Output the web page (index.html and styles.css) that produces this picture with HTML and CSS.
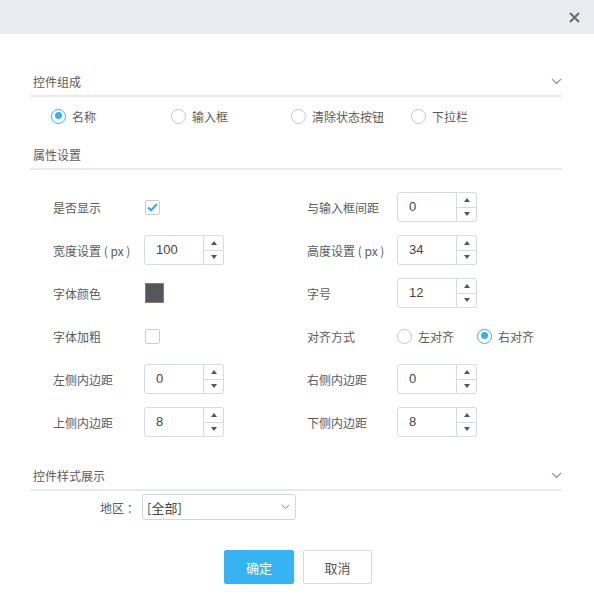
FILE: index.html
```html
<!DOCTYPE html>
<html lang="zh">
<head>
<meta charset="utf-8">
<link rel="stylesheet" href="styles.css">
</head>
<body>
<div class="header">
  <svg class="close" width="11" height="11" viewBox="0 0 11 11"><path d="M1 1L10 10M10 1L1 10" stroke="#6a6a6a" stroke-width="2" fill="none"/></svg>
</div>
<div class="content">
  <div class="sec-head first">
    <span>控件组成</span>
    <svg class="chev" width="11" height="7" viewBox="0 0 11 7"><path d="M1 1.2L5.5 5.4L10 1.2" stroke="#888" stroke-width="1.1" fill="none"/></svg>
  </div>
  <div class="radio-row">
    <label class="radio-item"><span class="radio on"></span>名称</label>
    <label class="radio-item"><span class="radio"></span>输入框</label>
    <label class="radio-item"><span class="radio"></span>清除状态按钮</label>
    <label class="radio-item"><span class="radio"></span>下拉栏</label>
  </div>
  <div class="sec-head second">
    <span>属性设置</span>
  </div>
  <div class="props">
    <div class="field"><span class="label">是否显示</span><span class="check on"><svg width="11" height="9" viewBox="0 0 11 9"><path d="M1 4.5L4 7.3L10 1.2" stroke="#33a9ee" stroke-width="2.2" fill="none"/></svg></span></div>
    <div class="field"><span class="label r">与输入框间距</span><div class="spin"><div class="spin-val">0</div><div class="spin-btns"><span class="up"><i></i></span><span class="down"><i></i></span></div></div></div>

    <div class="field"><span class="label">宽度设置 ( px )</span><div class="spin"><div class="spin-val">100</div><div class="spin-btns"><span class="up"><i></i></span><span class="down"><i></i></span></div></div></div>
    <div class="field"><span class="label r">高度设置 ( px )</span><div class="spin"><div class="spin-val">34</div><div class="spin-btns"><span class="up"><i></i></span><span class="down"><i></i></span></div></div></div>

    <div class="field"><span class="label">字体颜色</span><span class="swatch"></span></div>
    <div class="field"><span class="label r">字号</span><div class="spin"><div class="spin-val">12</div><div class="spin-btns"><span class="up"><i></i></span><span class="down"><i></i></span></div></div></div>

    <div class="field"><span class="label">字体加粗</span><span class="check"></span></div>
    <div class="field"><span class="label r">对齐方式</span>
      <label class="radio-item small"><span class="radio"></span>左对齐</label>
      <label class="radio-item small"><span class="radio on"></span>右对齐</label>
    </div>

    <div class="field"><span class="label">左侧内边距</span><div class="spin"><div class="spin-val">0</div><div class="spin-btns"><span class="up"><i></i></span><span class="down"><i></i></span></div></div></div>
    <div class="field"><span class="label r">右侧内边距</span><div class="spin"><div class="spin-val">0</div><div class="spin-btns"><span class="up"><i></i></span><span class="down"><i></i></span></div></div></div>

    <div class="field"><span class="label">上侧内边距</span><div class="spin"><div class="spin-val">8</div><div class="spin-btns"><span class="up"><i></i></span><span class="down"><i></i></span></div></div></div>
    <div class="field"><span class="label r">下侧内边距</span><div class="spin"><div class="spin-val">8</div><div class="spin-btns"><span class="up"><i></i></span><span class="down"><i></i></span></div></div></div>
  </div>
  <div class="sec-head third">
    <span>控件样式展示</span>
    <svg class="chev" width="11" height="7" viewBox="0 0 11 7"><path d="M1 1.2L5.5 5.4L10 1.2" stroke="#888" stroke-width="1.1" fill="none"/></svg>
  </div>
  <div class="select-row">
    <span class="sel-label">地区 ：</span>
    <div class="select"><span>[全部]</span><svg width="9" height="6" viewBox="0 0 9 6"><path d="M0.6 0.8L4.5 4.6L8.4 0.8" stroke="#888" stroke-width="1" fill="none"/></svg></div>
  </div>
  <div class="buttons">
    <button class="btn primary">确定</button>
    <button class="btn">取消</button>
  </div>
</div>
</body>
</html>
```
FILE: styles.css
```css
* { box-sizing: border-box; }
html, body { margin: 0; padding: 0; background: #fff; }
body {
  font-family: "Noto Sans CJK SC", "Noto Sans", sans-serif;
  font-size: 12px;
  color: #5c5c5c;
  width: 594px;
  height: 598px;
  overflow: hidden;
}
.header {
  height: 34px;
  background: #e9ecf0;
  display: flex;
  align-items: center;
  justify-content: flex-end;
  padding-right: 14px;
}
.close { display: block; }
.content { padding: 0 32px 0 30px; }
.sec-head {
  display: flex;
  align-items: center;
  justify-content: space-between;
  padding-left: 3px;
  line-height: 18px;
  height: 25px;
  padding-bottom: 4px;
  border-bottom: 2px solid #e6e9ed;
}
.sec-head.first { margin-top: 38px; }
.sec-head.second { margin-top: 19px; }
.sec-head.third { margin-top: 29px; }
.chev { display: block; }
.radio-row {
  display: flex;
  margin-top: 9px;
  height: 20px;
  align-items: center;
  padding-left: 21px;
}
.radio-item {
  display: flex;
  align-items: center;
  width: 120px;
  gap: 6px;
}
.radio-item.small { width: 80px; }
.radio {
  width: 15px;
  height: 15px;
  border-radius: 50%;
  border: 1px solid #bcc6d0;
  background: #fff;
  position: relative;
  flex: none;
}
.radio.on { border: 1.5px solid #36aef0; }
.radio.on::after {
  content: "";
  position: absolute;
  left: 2.5px; top: 2.5px;
  width: 7px; height: 7px;
  border-radius: 50%;
  background: #36aef0;
}
.props {
  display: grid;
  grid-template-columns: 254px 1fr;
  grid-auto-rows: 30px;
  row-gap: 13px;
  padding-top: 22px;
  padding-left: 23px;
}
.field { display: flex; align-items: center; height: 30px; }
.label { width: 91px; flex: none; white-space: nowrap; }
.label.r { width: 90px; }
.check {
  width: 15px;
  height: 15px;
  border: 1px solid #c4cdd7;
  border-radius: 2px;
  margin-left: 1px;
  display: flex;
  align-items: center;
  justify-content: center;
}
.check svg { display: block; }
.swatch {
  width: 19px;
  height: 20px;
  margin-left: 1px;
  background: #54585c;
  border: 1px solid #8f7a68;
}
.spin { display: flex; height: 30px; }
.spin-val {
  width: 60px;
  height: 30px;
  border: 1px solid #d5dbe2;
  border-radius: 3px 0 0 3px;
  padding-left: 11px;
  line-height: 28px;
  font-family: "Liberation Sans", Arial, sans-serif;
  font-size: 13px;
  color: #444;
}
.spin-btns {
  width: 20px;
  height: 30px;
  border: 1px solid #d5dbe2;
  border-left: none;
  border-radius: 0 3px 3px 0;
  display: flex;
  flex-direction: column;
}
.spin-btns span {
  flex: 1;
  display: flex;
  align-items: center;
  justify-content: center;
}
.spin-btns .up { border-bottom: 1px solid #d5dbe2; }
.spin-btns i { display: block; width: 0; height: 0; border-left: 3.5px solid transparent; border-right: 3.5px solid transparent; }
.spin-btns .up i { border-bottom: 4px solid #555; }
.spin-btns .down i { border-top: 4px solid #555; }
.select-row {
  display: flex;
  align-items: center;
  margin-top: 3px;
  height: 26px;
}
.sel-label { margin-left: 70px; width: 42px; white-space: nowrap; }
.select {
  width: 154px;
  height: 26px;
  border: 1px solid #cfd6de;
  border-radius: 3px;
  display: flex;
  align-items: center;
  justify-content: space-between;
  padding: 0 5px 0 4px;
  color: #444;
  font-size: 13px;
}
.select svg { display: block; }
.buttons {
  display: flex;
  justify-content: center;
  gap: 9px;
  margin-top: 30px;
  padding-left: 4px;
}
.btn {
  width: 69px;
  height: 34px;
  border: 1px solid #d5dbe2;
  background: #fff;
  border-radius: 2px;
  font-family: "Noto Sans CJK SC", sans-serif;
  font-size: 13px;
  color: #555;
  padding: 0;
}
.btn.primary {
  width: 70px;
  background: #37b2f3;
  border-color: #37b2f3;
  color: #fff;
}
```
